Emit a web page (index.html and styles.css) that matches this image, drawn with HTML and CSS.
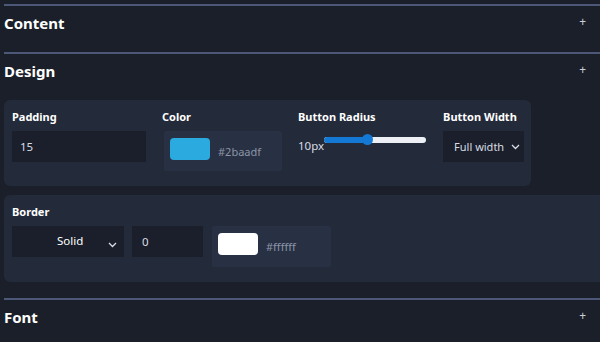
FILE: index.html
```html
<!DOCTYPE html>
<html lang="en">

<head>
    <meta charset="UTF-8">
    <meta name="viewport" content="width=device-width, initial-scale=1.0">
    <title>Button settings</title>
    <link rel="stylesheet" href="styles.css">
</head>

<body>
    <div class="panel">
        <div class="section">
            <div class="sec-head">
                <span class="sec-title">Content</span>
                <span class="sec-plus">+</span>
            </div>
        </div>

        <div class="section">
            <div class="sec-head">
                <span class="sec-title">Design</span>
                <span class="sec-plus">+</span>
            </div>
            <div class="sec-body">
                <div class="card card-main">
                    <div class="field f-padding">
                        <div class="label">Padding</div>
                        <div class="input">15</div>
                    </div>
                    <div class="field f-color">
                        <div class="label">Color</div>
                        <div class="color-pick">
                            <span class="swatch blue"></span>
                            <span class="hex">#2baadf</span>
                        </div>
                    </div>
                    <div class="field f-radius">
                        <div class="label">Button Radius</div>
                        <div class="range">
                            <span class="range-val">10px</span>
                            <div class="track">
                                <div class="fill"></div>
                                <div class="thumb"></div>
                            </div>
                        </div>
                    </div>
                    <div class="field f-width">
                        <div class="label">Button Width</div>
                        <div class="select">
                            <span>Full width</span>
                            <svg class="chev" width="9" height="6" viewBox="0 0 9 6"><path d="M1 1l3.5 3.5L8 1" fill="none" stroke="#d9dde5" stroke-width="1.3"/></svg>
                        </div>
                    </div>
                </div>

                <div class="card card-border">
                    <div class="label">Border</div>
                    <div class="row">
                        <div class="select sel-style">
                            <span>Solid</span>
                            <svg class="chev" width="9" height="6" viewBox="0 0 9 6"><path d="M1 1l3.5 3.5L8 1" fill="none" stroke="#d9dde5" stroke-width="1.3"/></svg>
                        </div>
                        <div class="input in-size">0</div>
                        <div class="color-pick">
                            <span class="swatch white"></span>
                            <span class="hex">#ffffff</span>
                        </div>
                    </div>
                </div>
            </div>
        </div>

        <div class="section">
            <div class="sec-head">
                <span class="sec-title">Font</span>
                <span class="sec-plus">+</span>
            </div>
        </div>
    </div>
</body>

</html>
```

FILE: styles.css
```css
* {
    margin: 0;
    padding: 0;
    box-sizing: border-box;
}

body {
    background-color: #1a1f29;
    font-family: "Noto Sans", "Open Sans", sans-serif;
    color: #fff;
    overflow: hidden;
}

.panel {
    padding: 4px 0 0 4px;
}

.sec-head {
    border-top: 2px solid #4d5878;
    height: 48px;
    padding: 7px 0 0 0;
    display: flex;
    justify-content: space-between;
}

.sec-title {
    font-size: 15px;
    font-weight: 700;
    line-height: 20px;
}

.sec-plus {
    font-size: 12px;
    line-height: 12px;
    color: #c9ced8;
    margin: 3px 14px 0 0;
}

.sec-body {
    padding: 0 0 16px 0;
}

.card {
    background-color: #232a3a;
    border-radius: 6px;
    padding: 8px 8px 15px 8px;
}

.card-main {
    width: 527px;
    display: flex;
    gap: 16px;
    margin-bottom: 9px;
}

.card-border {
    border-radius: 6px 0 0 6px;
}

.label {
    font-size: 11px;
    font-weight: 700;
    line-height: 18px;
    margin-bottom: 5px;
}

.input,
.select {
    background-color: #1a1f2b;
    height: 31px;
    font-size: 11.5px;
    color: #d8dce4;
    display: flex;
    align-items: center;
}

.input {
    padding-left: 8px;
}

.f-padding .input {
    width: 134px;
}

.color-pick {
    background-color: #283043;
    height: 40px;
    width: 118px;
    display: flex;
    align-items: flex-start;
    padding: 7px 0 0 6px;
    border-radius: 2px;
}

.f-color .color-pick {
    margin-left: 2px;
}

.swatch {
    width: 40px;
    height: 22px;
    border-radius: 4px;
}

.swatch.blue {
    background-color: #2baadf;
}

.swatch.white {
    background-color: #fff;
}

.hex {
    font-size: 11px;
    color: #8c95a8;
    margin: 6px 0 0 8px;
}

.range {
    display: flex;
    align-items: flex-start;
    padding-top: 3px;
}

.range-val {
    font-size: 11.5px;
    color: #d8dce4;
    margin-top: 4px;
}

.track {
    position: relative;
    width: 102px;
    height: 6px;
    border-radius: 3px;
    background-color: #eceff4;
    margin-top: 3px;
}

.fill {
    width: 44px;
    height: 6px;
    border-radius: 3px;
    background-color: #1479d4;
}

.thumb {
    position: absolute;
    left: 38px;
    top: -3px;
    width: 11px;
    height: 11px;
    border-radius: 50%;
    background-color: #1479d4;
}

.f-radius {
    margin-right: 1px;
}

.f-width .select {
    width: 81px;
    padding: 0 0 0 11px;
    justify-content: space-between;
    font-size: 11px;
}

.f-width .chev {
    margin-right: 4px;
}

.row {
    display: flex;
    align-items: flex-start;
}

.sel-style {
    width: 112px;
    margin-right: 8px;
    padding-left: 45px;
    align-items: flex-start;
    padding-top: 7px;
    position: relative;
    color: #fff;
}

.sel-style .chev {
    position: absolute;
    left: 96px;
    top: 16px;
}

.in-size {
    width: 71px;
    padding-left: 10px;
    margin-right: 9px;
}

.card-border .color-pick {
    width: 119px;
    height: 41px;
}
```
